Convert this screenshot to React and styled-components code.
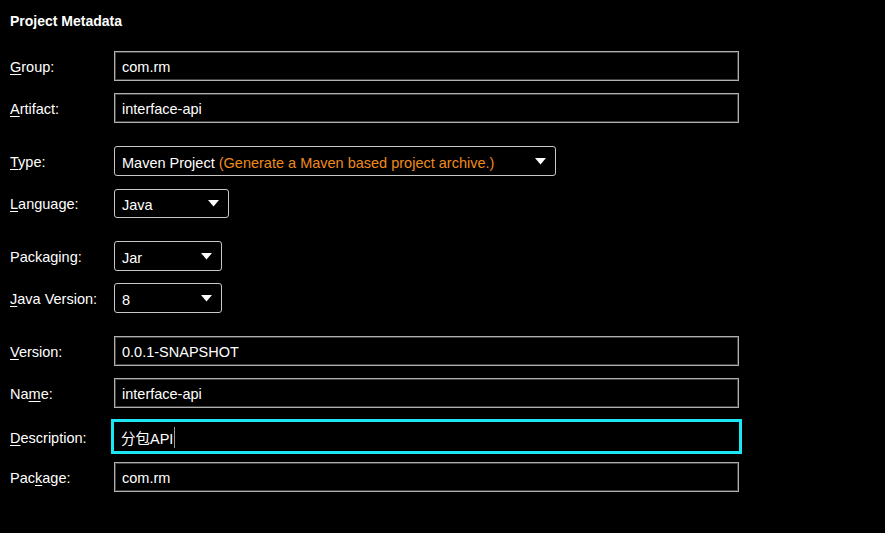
import React from "react";
import styled, { createGlobalStyle } from "styled-components";

const GlobalStyle = createGlobalStyle`
  html, body {
    margin: 0;
    padding: 0;
    background: #000;
  }
  body {
    font-family: "Liberation Sans", Arial, "Noto Sans CJK SC", sans-serif;
    color: #fff;
  }
`;

const Panel = styled.div`
  width: 885px;
  height: 533px;
  background: #000;
  padding: 14px 0 0 10px;
  box-sizing: border-box;
`;

const Title = styled.h1`
  margin: 0 0 22px;
  font-size: 14px;
  line-height: 15px;
  font-weight: bold;
`;

const Form = styled.div`
  display: flex;
  flex-direction: column;
`;

const Group = styled.div`
  display: flex;
  flex-direction: column;
  gap: 12px;
  & + & {
    margin-top: 23px;
  }
`;

const Row = styled.div`
  display: grid;
  grid-template-columns: 104px auto;
  align-items: center;
  height: 30px;
`;

const Label = styled.span`
  font-size: 14.5px;
  color: #fff;
  padding-top: 1px;
  u {
    text-decoration: underline;
    text-underline-offset: 2px;
  }
`;

const Field = styled.div`
  width: 625px;
  height: 30px;
  box-sizing: border-box;
  border: 1px solid #b0b0b0;
  box-shadow: inset 0 0 0 1px #404040;
  display: flex;
  align-items: center;
  padding: 1px 7px 0;
  font-size: 14.5px;
  color: #fff;
  ${(p) =>
    p.$focused &&
    `
    width: 631px;
    height: 35px;
    margin: -1px 0 0 -3px;
    border: 3px solid #1ce6f4;
    box-shadow: none;
    padding-left: 7px;
    font-family: "Liberation Sans", "Noto Sans CJK SC", sans-serif;
  `}
`;

const Caret = styled.span`
  display: inline-block;
  width: 1px;
  height: 21px;
  background: #9a9a9a;
  margin-left: 1px;
`;

const Select = styled.div`
  width: ${(p) => p.$width}px;
  height: ${(p) => p.$height || 30}px;
  box-sizing: border-box;
  border: 1px solid #c8c8c8;
  border-radius: 3px;
  display: flex;
  align-items: center;
  justify-content: space-between;
  padding: 3px 9px 0 7px;
  font-size: 14.5px;
  color: #fff;
`;

const Hint = styled.span`
  color: #ef8a1d;
`;

const Arrow = () => (
  <svg width="11" height="7" viewBox="0 0 11 7" style={{ marginTop: -2 }}>
    <path d="M0 0h11L5.5 6.5z" fill="#fff" />
  </svg>
);

const App = () => (
  <Panel>
    <GlobalStyle />
    <Title>Project Metadata</Title>
    <Form>
      <Group>
        <Row>
          <Label><u>G</u>roup:</Label>
          <Field>com.rm</Field>
        </Row>
        <Row>
          <Label><u>A</u>rtifact:</Label>
          <Field>interface-api</Field>
        </Row>
      </Group>
      <Group>
        <Row>
          <Label><u>T</u>ype:</Label>
          <Select $width={442}>
            <span>
              Maven Project <Hint>(Generate a Maven based project archive.)</Hint>
            </span>
            <Arrow />
          </Select>
        </Row>
        <Row>
          <Label><u>L</u>anguage:</Label>
          <Select $width={115} $height={29}>
            <span>Java</span>
            <Arrow />
          </Select>
        </Row>
      </Group>
      <Group>
        <Row>
          <Label>Packaging:</Label>
          <Select $width={108}>
            <span>Jar</span>
            <Arrow />
          </Select>
        </Row>
        <Row>
          <Label><u>J</u>ava Version:</Label>
          <Select $width={108}>
            <span>8</span>
            <Arrow />
          </Select>
        </Row>
      </Group>
      <Group>
        <Row>
          <Label><u>V</u>ersion:</Label>
          <Field>0.0.1-SNAPSHOT</Field>
        </Row>
        <Row>
          <Label>Na<u>m</u>e:</Label>
          <Field>interface-api</Field>
        </Row>
        <Row>
          <Label><u>D</u>escription:</Label>
          <Field $focused>
            分包API
            <Caret />
          </Field>
        </Row>
        <Row>
          <Label>Pac<u>k</u>age:</Label>
          <Field>com.rm</Field>
        </Row>
      </Group>
    </Form>
  </Panel>
);

export default App;
